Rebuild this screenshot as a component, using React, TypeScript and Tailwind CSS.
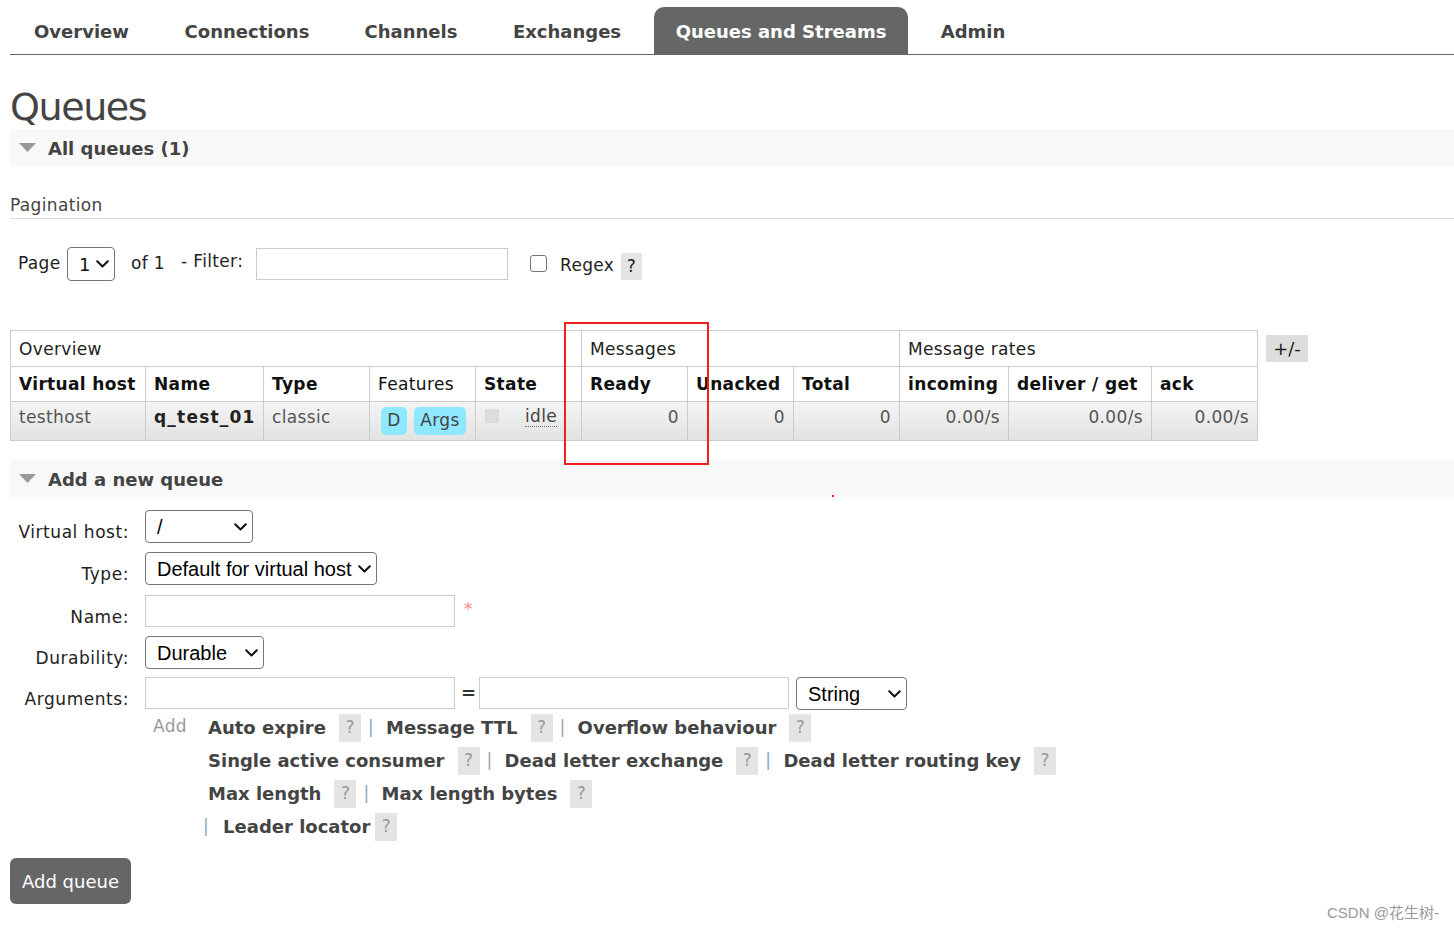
import React from "react";

function Chevron() {
  return (
    <svg width="13" height="8" viewBox="0 0 13 8" fill="none">
      <path d="M1.2 1.2 L6.5 6.5 L11.8 1.2" stroke="#111" strokeWidth="2" strokeLinecap="round" strokeLinejoin="round" />
    </svg>
  );
}

function Help() {
  return (
    <span className="inline-flex h-[28px] w-[22px] items-center justify-center bg-[#e4e4e4] text-[17px] tracking-normal text-[#999]">?</span>
  );
}

function Sep() {
  return <span className="ml-[7px] mr-[12px] text-[17px] text-[#8fa3b8]">|</span>;
}

function Item({ children }: { children: React.ReactNode }) {
  return <span className="text-[18px] font-bold tracking-normal text-[#444]">{children}</span>;
}

export default function App() {
  return (
    <div className="relative min-h-[929px] w-[1454px] overflow-hidden bg-white font-['DejaVu_Sans',Verdana,sans-serif] text-[17px] tracking-[0.35px] text-[#444]">
      {/* Nav */}
      <div className="pt-[7px] tracking-normal">
        <div className="ml-[10px] flex gap-[10px] border-b border-[#666] pl-[1px]">
          <div className="flex h-[47px] w-[141px] items-center justify-center pt-[2px] text-[18px] font-bold text-[#444]">Overview</div>
          <div className="flex h-[47px] w-[170px] items-center justify-center pt-[2px] text-[18px] font-bold text-[#444]">Connections</div>
          <div className="flex h-[47px] w-[138px] items-center justify-center pt-[2px] text-[18px] font-bold text-[#444]">Channels</div>
          <div className="flex h-[47px] w-[154px] items-center justify-center pt-[2px] text-[18px] font-bold text-[#444]">Exchanges</div>
          <div className="flex h-[47px] w-[254px] items-center justify-center rounded-t-[10px] bg-[#666] pt-[2px] text-[18px] font-bold text-white">Queues and Streams</div>
          <div className="flex h-[47px] w-[110px] items-center justify-center pt-[2px] text-[18px] font-bold text-[#444]">Admin</div>
        </div>
      </div>

      <h1 className="ml-[10px] mt-[30px] text-[38px] font-normal leading-[44px] tracking-[-1.4px] text-[#444]">Queues</h1>

      {/* All queues header */}
      <div className="ml-[10px] flex h-[37px] items-center bg-[#f8f8f8]">
        <svg className="ml-[9px]" width="17" height="9" viewBox="0 0 17 9">
          <path d="M0 0H17L8.5 9Z" fill="#999" />
        </svg>
        <span className="ml-[12px] pt-[2px] text-[18px] font-bold tracking-normal text-[#444]">All queues (1)</span>
      </div>

      <div className="ml-[10px] mt-[29px] border-b border-[#ddd] pb-[3px] leading-[20px] text-[#444]">Pagination</div>

      {/* Page row */}
      <div className="ml-[18px] mt-[28px] flex h-[34px] items-center text-[#222]">
        <span className="w-[43px]">Page</span>
        <div className="ml-[6px] flex h-[34px] w-[48px] items-center justify-between rounded-[4px] border border-[#767676] pl-[11px] pr-[5px] text-[18px] text-[#111]">
          <span>1</span>
          <Chevron />
        </div>
        <span className="ml-[16px] w-[34px]">of 1</span>
        <span className="mb-[5px] ml-[16px] w-[67px]">- Filter:</span>
        <div className="ml-[8px] h-[32px] w-[252px] border border-[#ccc] bg-white" />
        <div className="mb-[2px] ml-[22px] h-[17px] w-[17px] rounded-[3px] border border-[#767676] bg-white" />
        <span className="ml-[13px] mt-[4px] w-[54px]">Regex</span>
        <span className="ml-[7px] mt-[5px] flex h-[27px] w-[21px] items-center justify-center bg-[#e4e4e4] text-[#222]">?</span>
      </div>

      {/* Table */}
      <div className="ml-[10px] mt-[49px] flex items-start">
        <table className="w-[1247px] table-fixed border-collapse text-[17px]">
          <colgroup>
            <col className="w-[135px]" />
            <col className="w-[118px]" />
            <col className="w-[106px]" />
            <col className="w-[106px]" />
            <col className="w-[106px]" />
            <col className="w-[106px]" />
            <col className="w-[106px]" />
            <col className="w-[106px]" />
            <col className="w-[109px]" />
            <col className="w-[143px]" />
            <col className="w-[106px]" />
          </colgroup>
          <thead>
            <tr className="h-[36px]">
              <th colSpan={5} className="border border-[#ccc] px-[8px] pt-[2px] text-left font-normal text-[#222]">Overview</th>
              <th colSpan={3} className="border border-[#ccc] px-[8px] pt-[2px] text-left font-normal text-[#222]">Messages</th>
              <th colSpan={3} className="border border-[#ccc] px-[8px] pt-[2px] text-left font-normal text-[#222]">Message rates</th>
            </tr>
            <tr className="h-[35px]">
              <th className="border border-[#ccc] px-[8px] pt-[2px] text-left font-bold text-[#111]">Virtual host</th>
              <th className="border border-[#ccc] px-[8px] pt-[2px] text-left font-bold text-[#111]">Name</th>
              <th className="border border-[#ccc] px-[8px] pt-[2px] text-left font-bold text-[#111]">Type</th>
              <th className="border border-[#ccc] px-[8px] pt-[2px] text-left font-normal text-[#111]">Features</th>
              <th className="border border-[#ccc] px-[8px] pt-[2px] text-left font-bold text-[#111]">State</th>
              <th className="border border-[#ccc] px-[8px] pt-[2px] text-left font-bold text-[#111]">Ready</th>
              <th className="border border-[#ccc] px-[8px] pt-[2px] text-left font-bold text-[#111]">Unacked</th>
              <th className="border border-[#ccc] px-[8px] pt-[2px] text-left font-bold text-[#111]">Total</th>
              <th className="border border-[#ccc] px-[8px] pt-[2px] text-left font-bold text-[#111]">incoming</th>
              <th className="border border-[#ccc] px-[8px] pt-[2px] text-left font-bold text-[#111]">deliver / get</th>
              <th className="border border-[#ccc] px-[8px] pt-[2px] text-left font-bold text-[#111]">ack</th>
            </tr>
          </thead>
          <tbody>
            <tr className="h-[39px] bg-gradient-to-b from-[#f4f4f4] to-[#e2e2e2] text-[#555]">
              <td className="border border-[#ccc] px-[8px] pt-[5px] align-top leading-[20px]">testhost</td>
              <td className="border border-[#ccc] px-[8px] pt-[5px] align-top font-bold leading-[20px] tracking-[1.2px] text-[#222]">q_test_01</td>
              <td className="border border-[#ccc] px-[8px] pt-[5px] align-top leading-[20px]">classic</td>
              <td className="border border-[#ccc] px-[8px] align-middle">
                <div className="ml-[3px] flex gap-[7px]">
                  <span className="flex h-[28px] w-[26px] items-center justify-center rounded-[5px] bg-[#8ee8ff] text-[#444]">D</span>
                  <span className="flex h-[28px] w-[52px] items-center justify-center rounded-[5px] bg-[#8ee8ff] text-[#444]">Args</span>
                </div>
              </td>
              <td className="border border-[#ccc] px-[8px] pt-[5px] align-top leading-[20px]">
                <div className="flex items-start">
                  <span className="ml-[1px] mt-[2px] h-[14px] w-[14px] bg-[#dcdcdc]" />
                  <span className="ml-[26px] border-b border-dotted border-[#777] leading-[19px] text-[#444]">idle</span>
                </div>
              </td>
              <td className="border border-[#ccc] px-[8px] pt-[5px] text-right align-top leading-[20px]">0</td>
              <td className="border border-[#ccc] px-[8px] pt-[5px] text-right align-top leading-[20px]">0</td>
              <td className="border border-[#ccc] px-[8px] pt-[5px] text-right align-top leading-[20px]">0</td>
              <td className="border border-[#ccc] px-[8px] pt-[5px] text-right align-top leading-[20px]">0.00/s</td>
              <td className="border border-[#ccc] px-[8px] pt-[5px] text-right align-top leading-[20px]">0.00/s</td>
              <td className="border border-[#ccc] px-[8px] pt-[5px] text-right align-top leading-[20px]">0.00/s</td>
            </tr>
          </tbody>
        </table>
        <div className="ml-[8px] mt-[5px] flex h-[27px] w-[42px] items-center justify-center bg-[#ddd] text-[18px] tracking-normal text-[#222]">+/-</div>
      </div>

      {/* Add a new queue header */}
      <div className="ml-[10px] mt-[19px] flex h-[37px] items-center bg-[#f8f8f8]">
        <svg className="ml-[9px]" width="17" height="9" viewBox="0 0 17 9">
          <path d="M0 0H17L8.5 9Z" fill="#999" />
        </svg>
        <span className="ml-[12px] pt-[1px] text-[18px] font-bold tracking-normal text-[#444]">Add a new queue</span>
      </div>

      {/* Form */}
      <div className="ml-[10px] mt-[13px]">
        <div className="flex h-[42px]">
          <div className="w-[119px] pt-[12px] text-right leading-[20px] tracking-[0.55px] text-[#222]">Virtual host:</div>
          <div className="ml-[16px] flex h-[33px] w-[108px] items-center justify-between rounded-[4px] border border-[#767676] pl-[11px] pr-[5px] font-['Liberation_Sans',Arial,sans-serif] text-[20px] tracking-normal text-black">
            <span>/</span>
            <Chevron />
          </div>
        </div>
        <div className="flex h-[43px]">
          <div className="w-[119px] pt-[12px] text-right leading-[20px] tracking-[0.55px] text-[#222]">Type:</div>
          <div className="ml-[16px] flex h-[33px] w-[232px] items-center justify-between rounded-[4px] border border-[#767676] pl-[11px] pr-[5px] font-['Liberation_Sans',Arial,sans-serif] text-[20px] tracking-normal text-black">
            <span>Default for virtual host</span>
            <Chevron />
          </div>
        </div>
        <div className="flex h-[41px]">
          <div className="w-[119px] pt-[12px] text-right leading-[20px] tracking-[0.55px] text-[#222]">Name:</div>
          <div className="ml-[16px] h-[32px] w-[310px] border border-[#ccc] bg-white" />
          <span className="ml-[9px] pt-[2px] text-[17px] text-[#f88]">*</span>
        </div>
        <div className="flex h-[41px]">
          <div className="w-[119px] pt-[12px] text-right leading-[20px] tracking-[0.55px] text-[#222]">Durability:</div>
          <div className="ml-[16px] flex h-[33px] w-[119px] items-center justify-between rounded-[4px] border border-[#767676] pl-[11px] pr-[5px] font-['Liberation_Sans',Arial,sans-serif] text-[20px] tracking-normal text-black">
            <span>Durable</span>
            <Chevron />
          </div>
        </div>
        <div className="flex h-[34px]">
          <div className="w-[119px] pt-[12px] text-right leading-[20px] tracking-[0.55px] text-[#222]">Arguments:</div>
          <div className="ml-[16px] h-[32px] w-[310px] border border-[#ccc] bg-white" />
          <span className="ml-[6px] w-[12px] pt-[6px] text-center text-[18px] font-bold leading-[20px] tracking-normal text-[#333]">=</span>
          <div className="ml-[6px] h-[32px] w-[310px] border border-[#ccc] bg-white" />
          <div className="ml-[7px] flex h-[33px] w-[111px] items-center justify-between rounded-[4px] border border-[#767676] pl-[11px] pr-[5px] font-['Liberation_Sans',Arial,sans-serif] text-[20px] tracking-normal text-black">
            <span>String</span>
            <Chevron />
          </div>
        </div>

        {/* argument shortcuts */}
        <div className="ml-[135px] flex">
          <div className="w-[63px] pl-[8px] pt-[3px] text-[17px] text-[#999]">Add</div>
          <div className="flex flex-col">
            <div className="flex h-[33px] items-center">
              <Item>Auto expire</Item>
              <span className="ml-[13px]"><Help /></span>
              <Sep />
              <Item>Message TTL</Item>
              <span className="ml-[13px]"><Help /></span>
              <Sep />
              <Item>Overflow behaviour</Item>
              <span className="ml-[13px]"><Help /></span>
            </div>
            <div className="flex h-[33px] items-center">
              <Item>Single active consumer</Item>
              <span className="ml-[13px]"><Help /></span>
              <Sep />
              <Item>Dead letter exchange</Item>
              <span className="ml-[13px]"><Help /></span>
              <Sep />
              <Item>Dead letter routing key</Item>
              <span className="ml-[13px]"><Help /></span>
            </div>
            <div className="flex h-[33px] items-center">
              <Item>Max length</Item>
              <span className="ml-[13px]"><Help /></span>
              <Sep />
              <Item>Max length bytes</Item>
              <span className="ml-[13px]"><Help /></span>
            </div>
            <div className="-ml-[5px] flex h-[33px] items-center">
              <span className="mr-[14px] text-[17px] text-[#8fa3b8]">|</span>
              <Item>Leader locator</Item>
              <span className="ml-[5px]"><Help /></span>
            </div>
          </div>
        </div>

        <div className="mt-[15px] flex h-[46px] w-[121px] items-center justify-center rounded-[6px] bg-[#666] text-[18px] tracking-normal text-white">Add queue</div>
      </div>

      {/* annotation overlay */}
      <div className="absolute left-[564px] top-[322px] h-[143px] w-[145px] border-2 border-[#f02020]" />
      <div className="absolute left-[832px] top-[495px] h-[2px] w-[2px] bg-[#f02020]" />

      <div className="absolute left-[1327px] top-[902px] font-['Liberation_Sans','Noto_Sans_CJK_SC',sans-serif] text-[15px] tracking-normal text-[#999]">CSDN @花生树-</div>
    </div>
  );
}
